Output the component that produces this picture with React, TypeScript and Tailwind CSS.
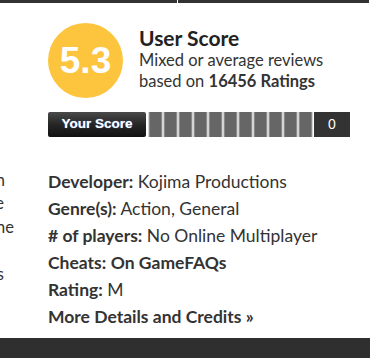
import React from "react";

const details: { label: string; value: string; boldValue?: boolean }[] = [
  { label: "Developer:", value: "Kojima Productions" },
  { label: "Genre(s):", value: "Action, General" },
  { label: "# of players:", value: "No Online Multiplayer" },
  { label: "Cheats:", value: "On GameFAQs", boldValue: true },
  { label: "Rating:", value: "M" },
];

// tails of the neighbouring column that is cut off by the viewport edge
const sideLines = [
  { text: "campaign", pad: "pr-[11px]", h: "h-[25px]" },
  { text: "sequence", pad: "pr-[12px]", h: "h-[23px]" },
  { text: "machine", pad: "pr-[2px]", h: "h-[24px]" },
  { text: "", pad: "", h: "h-[23px]" },
  { text: "allies", pad: "pr-[12px]", h: "h-[24px]" },
];

function ScoreBar() {
  return (
    <div className="flex h-[25px] items-stretch">
      <div className="flex w-[98px] items-center justify-center rounded-[2px] bg-gradient-to-b from-[#4a4a4a] via-[#262626] to-[#111] font-['Liberation_Sans',sans-serif] text-[13.5px] font-bold text-white [text-shadow:0_0_1px_#6aa0ff]">
        Your Score
      </div>
      <div className="ml-[2px] flex gap-[2px] bg-[#d4d4d4] px-[1px]">
        {Array.from({ length: 11 }).map((_, i) => (
          <div key={i} className="w-[13px] bg-[#666] border-x border-[#8a8a8a]" />
        ))}
      </div>
      <div className="ml-[1px] flex w-[36px] items-center justify-center bg-[#333] font-['Liberation_Sans',sans-serif] text-[14px] text-white">
        0
      </div>
    </div>
  );
}

export default function App() {
  return (
    <div className="flex h-[358px] w-[377px] flex-col overflow-hidden bg-white font-['Lato',sans-serif] text-[#333]">
      <div className="flex h-[3px] gap-[1px]">
        <div className="w-[177px] bg-[#333]" />
        <div className="w-[191px] bg-[#333]" />
      </div>

      <div className="flex flex-1">
        <div className="w-[16px] shrink-0 overflow-hidden pt-[164px]">
          {sideLines.map((l, i) => (
            <div key={i} className={`flex items-end justify-end whitespace-nowrap text-[16.5px] leading-[24px] ${l.h} ${l.pad}`}>
              {l.text}
            </div>
          ))}
        </div>

        <div className="ml-[32px] flex w-[310px] flex-col pt-[20px]">
          <div className="flex">
            <div className="flex h-[75px] w-[75px] items-center justify-center rounded-full bg-[#fdc43e] font-['Liberation_Sans',sans-serif] text-[37px] font-bold text-white">
              5.3
            </div>
            <div className="ml-[16px] pt-[3px]">
              <div className="text-[21px] font-bold leading-[24px] text-[#222]">User Score</div>
              <div className="text-[16.5px] leading-[21px]">Mixed or average reviews</div>
              <div className="text-[16.5px] leading-[21px]">
                based on <span className="font-bold">16456 Ratings</span>
              </div>
            </div>
          </div>

          <div className="mt-[14px]">
            <ScoreBar />
          </div>

          <ul className="mt-[31px]">
            {details.map((d) => (
              <li key={d.label} className="text-[17.5px] leading-[27px]">
                <span className="font-bold">{d.label}</span>{" "}
                <span className={d.boldValue ? "font-bold" : ""}>{d.value}</span>
              </li>
            ))}
            <li className="text-[17.5px] font-bold leading-[27px]">More Details and Credits »</li>
          </ul>
        </div>
      </div>

      <div className="h-[20px] w-[370px] shrink-0 bg-[#2f2f2f]" />
    </div>
  );
}
